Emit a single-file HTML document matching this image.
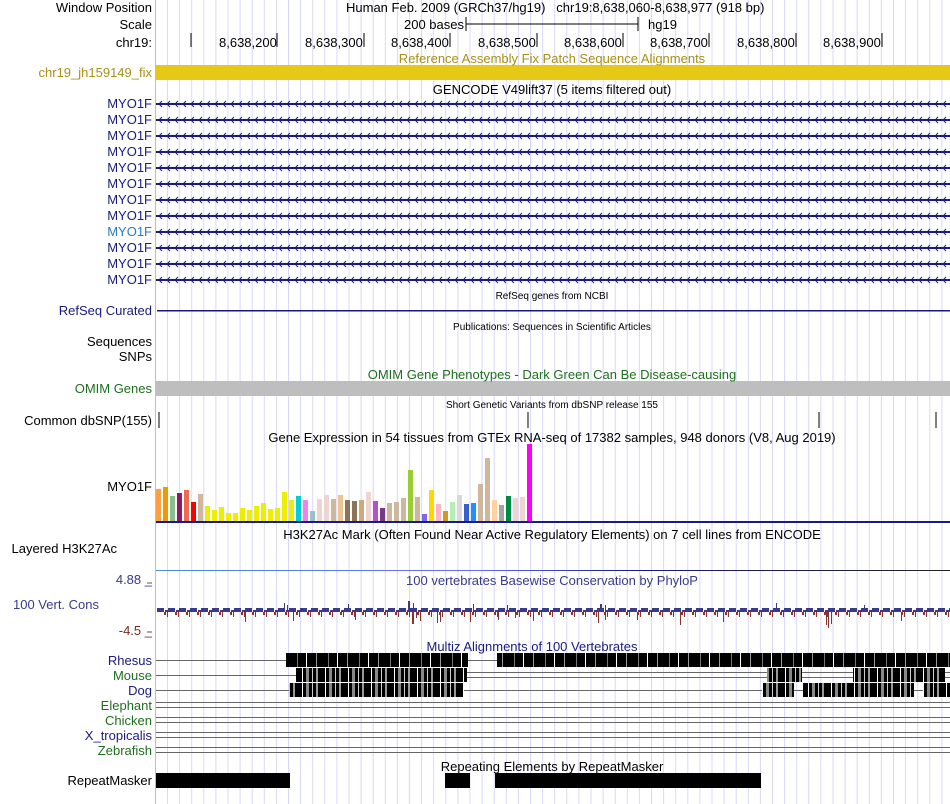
<!DOCTYPE html>
<html><head><meta charset="utf-8"><style>
body{margin:0;width:950px;height:804px;background:#fff;position:relative;overflow:hidden;font-family:"Liberation Sans",Arial,sans-serif;font-size:13px;color:#000}
.t{position:absolute;white-space:nowrap;line-height:15px}
.l{position:absolute;right:798px;white-space:nowrap;text-align:right;line-height:15px}
.c{position:absolute;white-space:nowrap;line-height:13px;transform:translateX(-50%)}
.s{font-size:10px}
.n{color:#1a1a80}.g{color:#1f6e1f}
</style></head><body>
<svg width="950" height="804" style="position:absolute;left:0;top:0">
<defs>
<pattern id="grid" x="167" y="0" width="12.1" height="10" patternUnits="userSpaceOnUse"><rect x="0" y="0" width="1" height="10" fill="#d8d8f6"/></pattern>
<pattern id="arr" x="158" y="0" width="8" height="16" patternUnits="userSpaceOnUse"><path d="M4 5 L1 8 L4 11" stroke="#1a1a80" fill="none" stroke-width="1"/></pattern>
<pattern id="stripeA" x="0" y="0" width="31" height="10" patternUnits="userSpaceOnUse"><rect width="31" height="10" fill="#000"/><rect x="6" width="1" height="10" fill="#999"/><rect x="18" width="1" height="10" fill="#777"/><rect x="27" width="1" height="10" fill="#fff"/></pattern>
<pattern id="stripeB" x="0" y="0" width="23" height="10" patternUnits="userSpaceOnUse"><rect width="23" height="10" fill="#000"/><rect x="3" width="1" height="10" fill="#fff"/><rect x="7" width="3" height="10" fill="#888"/><rect x="13" width="1" height="10" fill="#ccc"/><rect x="17" width="2" height="10" fill="#999"/></pattern>
<pattern id="cons" x="157" y="0" width="11" height="20" patternUnits="userSpaceOnUse"><rect x="0" y="8" width="7" height="4" fill="#3a3a8c"/><rect x="8" y="10" width="3" height="2" fill="#3a3a8c"/><rect x="7" y="12" width="2" height="3" fill="#8b3030"/><rect x="10" y="12" width="1" height="5" fill="#8b3030"/></pattern>
<linearGradient id="h3" x1="0" x2="1"><stop offset="0" stop-color="#4a8ad8"/><stop offset="0.4" stop-color="#6a6af0"/><stop offset="0.6" stop-color="#1a1a80"/><stop offset="1" stop-color="#222"/></linearGradient>
</defs>
<rect x="156" y="0" width="794" height="804" fill="url(#grid)"/>
<rect x="155" y="0" width="1" height="804" fill="#f4a8a8"/>
<path d="M466 17V31M466 24H638M638 17V31" stroke="#000" fill="none"/>
<path d="M191 33V47M277 33V47M364 33V47M450 33V47M537 33V47M623 33V47M709 33V47M796 33V47M882 33V47" stroke="#000"/>
<rect x="156" y="65" width="794" height="15" fill="#e6c816"/>
<g fill="#1a1a80">
<rect x="156" y="103" width="794" height="2"/><rect x="156" y="119" width="794" height="2"/><rect x="156" y="135" width="794" height="2"/><rect x="156" y="151" width="794" height="2"/><rect x="156" y="167" width="794" height="2"/><rect x="156" y="183" width="794" height="2"/><rect x="156" y="199" width="794" height="2"/><rect x="156" y="215" width="794" height="2"/><rect x="156" y="231" width="794" height="2"/><rect x="156" y="247" width="794" height="2"/><rect x="156" y="263" width="794" height="2"/><rect x="156" y="279" width="794" height="2"/>
</g>
<rect x="156" y="96" width="794" height="192" fill="url(#arr)"/>
<rect x="157" y="310" width="793" height="1.5" fill="#1a1a80"/>
<rect x="156" y="381" width="794" height="15" fill="#bebebe"/>
<path d="M159 412V428M528 412V428M819 412V428M936 412V428" stroke="#000"/>
<rect x="156" y="521" width="794" height="2" fill="#1a1a80"/>
<rect x="156" y="570" width="794" height="1" fill="url(#h3)"/>
<rect x="157" y="600" width="793" height="20" fill="url(#cons)"/>
<g fill="#3a3a8c"><rect x="284" y="603" width="1" height="9"/><rect x="287" y="605" width="1" height="7"/><rect x="348" y="604" width="1" height="8"/><rect x="408" y="601" width="2" height="11"/><rect x="413" y="603" width="1" height="9"/><rect x="473" y="604" width="1" height="8"/><rect x="600" y="604" width="2" height="8"/><rect x="605" y="605" width="1" height="7"/><rect x="776" y="603" width="1" height="9"/><rect x="864" y="605" width="1" height="7"/><rect x="507" y="605" width="1" height="7"/></g>
<g fill="#8b3030"><rect x="245" y="612" width="1" height="10"/><rect x="293" y="612" width="1" height="9"/><rect x="355" y="612" width="1" height="8"/><rect x="413" y="612" width="1" height="12"/><rect x="420" y="612" width="1" height="9"/><rect x="470" y="612" width="1" height="10"/><rect x="515" y="612" width="1" height="6"/><rect x="598" y="612" width="1" height="11"/><rect x="605" y="612" width="1" height="8"/><rect x="680" y="612" width="1" height="13"/><rect x="416" y="612" width="1" height="6"/><rect x="412" y="612" width="1" height="12"/><rect x="440" y="612" width="1" height="10"/><rect x="498" y="612" width="1" height="8"/><rect x="533" y="612" width="1" height="9"/><rect x="437" y="612" width="1" height="11"/><rect x="723" y="612" width="1" height="10"/><rect x="826" y="612" width="1" height="13"/><rect x="828" y="612" width="1" height="16"/><rect x="831" y="612" width="1" height="12"/><rect x="901" y="612" width="1" height="9"/><rect x="637" y="612" width="1" height="8"/></g>
<path d="M147 583H152M147 632H152" stroke="#555"/>
<g stroke="#666" stroke-width="1">
<path d="M156 660.5H286M468 660.5H497"/>
<path d="M156 675.5H296"/><path d="M467 672.5H950M467 677.5H950"/>
<path d="M156 690.5H289M464 690.5H950"/>
<path d="M156 702.5H950M156 707.5H950M156 717.5H950M156 722.5H950M156 732.5H950M156 737.5H950M156 747.5H950M156 752.5H950"/>
</g>
<rect x="286" y="653" width="182" height="14" fill="url(#stripeA)"/>
<rect x="497" y="653" width="453" height="14" fill="url(#stripeA)"/>
<rect x="296" y="668" width="171" height="14" fill="url(#stripeB)"/>
<rect x="767" y="668" width="35" height="14" fill="url(#stripeB)"/>
<rect x="853" y="668" width="92" height="14" fill="url(#stripeB)"/>
<rect x="289" y="683" width="175" height="14" fill="url(#stripeB)"/>
<rect x="762" y="683" width="32" height="14" fill="url(#stripeB)"/>
<rect x="803" y="683" width="111" height="14" fill="url(#stripeB)"/>
<rect x="923" y="683" width="27" height="14" fill="url(#stripeB)"/>
<rect x="156" y="773" width="134" height="15" fill="#000"/>
<rect x="445" y="773" width="25" height="15" fill="#000"/>
<rect x="495" y="773" width="266" height="15" fill="#000"/>
<g>
<rect x="156" y="489" width="5" height="32" fill="#ff9f3f"/><rect x="163" y="487" width="5" height="34" fill="#ee9a00"/><rect x="170" y="496" width="5" height="25" fill="#8fbc8f"/><rect x="177" y="493" width="5" height="28" fill="#8b1c62"/><rect x="184" y="490" width="5" height="31" fill="#ee6a50"/><rect x="191" y="502" width="5" height="19" fill="#ff0000"/><rect x="198" y="494" width="5" height="27" fill="#cdb79e"/><rect x="205" y="506" width="5" height="15" fill="#eeee00"/><rect x="212" y="510" width="5" height="11" fill="#eeee00"/><rect x="219" y="507" width="5" height="14" fill="#eeee00"/><rect x="226" y="513" width="5" height="8" fill="#eeee00"/><rect x="233" y="513" width="5" height="8" fill="#eeee00"/><rect x="240" y="508" width="5" height="13" fill="#eeee00"/><rect x="247" y="510" width="5" height="11" fill="#eeee00"/><rect x="254" y="506" width="5" height="15" fill="#eeee00"/><rect x="261" y="503" width="5" height="18" fill="#eeee00"/><rect x="268" y="509" width="5" height="12" fill="#eeee00"/><rect x="275" y="508" width="5" height="13" fill="#eeee00"/><rect x="282" y="492" width="5" height="29" fill="#eeee00"/><rect x="289" y="500" width="5" height="21" fill="#eeee00"/><rect x="296" y="496" width="5" height="25" fill="#00ced1"/><rect x="303" y="500" width="5" height="21" fill="#ee82ee"/><rect x="310" y="511" width="5" height="10" fill="#9ac0cd"/><rect x="317" y="499" width="5" height="22" fill="#eed5d2"/><rect x="324" y="495" width="5" height="26" fill="#eed5d2"/><rect x="331" y="499" width="5" height="22" fill="#cdb79e"/><rect x="338" y="495" width="5" height="26" fill="#eec591"/><rect x="345" y="500" width="5" height="21" fill="#8b7355"/><rect x="352" y="501" width="5" height="20" fill="#8b7355"/><rect x="359" y="500" width="5" height="21" fill="#cdaa7d"/><rect x="366" y="492" width="5" height="29" fill="#eed5d2"/><rect x="373" y="501" width="5" height="20" fill="#b452cd"/><rect x="380" y="508" width="5" height="13" fill="#7a378b"/><rect x="387" y="503" width="5" height="18" fill="#cdb79e"/><rect x="394" y="502" width="5" height="19" fill="#cdb79e"/><rect x="401" y="498" width="5" height="23" fill="#cdb79e"/><rect x="408" y="470" width="5" height="51" fill="#9acd32"/><rect x="415" y="497" width="5" height="24" fill="#cdb79e"/><rect x="422" y="514" width="5" height="7" fill="#7b68ee"/><rect x="429" y="490" width="5" height="31" fill="#ffd700"/><rect x="436" y="504" width="5" height="17" fill="#ffb6c1"/><rect x="443" y="511" width="5" height="10" fill="#cd9b1d"/><rect x="450" y="502" width="5" height="19" fill="#b4eeb4"/><rect x="457" y="495" width="5" height="26" fill="#d9d9d9"/><rect x="464" y="504" width="5" height="17" fill="#3a5fcd"/><rect x="471" y="503" width="5" height="18" fill="#1e90ff"/><rect x="478" y="484" width="5" height="37" fill="#cdb79e"/><rect x="485" y="458" width="5" height="63" fill="#cdb79e"/><rect x="492" y="500" width="5" height="21" fill="#ffd39b"/><rect x="499" y="505" width="5" height="16" fill="#a6a6a6"/><rect x="506" y="496" width="5" height="25" fill="#008b45"/><rect x="513" y="498" width="5" height="23" fill="#eed5d2"/><rect x="520" y="497" width="5" height="24" fill="#eed5d2"/><rect x="527" y="444" width="5" height="77" fill="#ff00ff"/>
</g>
</svg>

<div class="l" style="top:0">Window Position</div>
<div class="l" style="top:17px">Scale</div>
<div class="l" style="top:35px">chr19:</div>
<div class="t" style="left:346px;top:0">Human Feb. 2009 (GRCh37/hg19)&nbsp;&nbsp; chr19:8,638,060-8,638,977 (918 bp)</div>
<div class="t" style="left:404px;top:17px">200 bases</div>
<div class="t" style="left:648px;top:17px">hg19</div>
<div class="t" style="left:219px;top:35px">8,638,200</div>
<div class="t" style="left:305px;top:35px">8,638,300</div>
<div class="t" style="left:391px;top:35px">8,638,400</div>
<div class="t" style="left:478px;top:35px">8,638,500</div>
<div class="t" style="left:564px;top:35px">8,638,600</div>
<div class="t" style="left:650px;top:35px">8,638,700</div>
<div class="t" style="left:737px;top:35px">8,638,800</div>
<div class="t" style="left:823px;top:35px">8,638,900</div>
<div class="c" style="left:552px;top:52px;color:#a88f18">Reference Assembly Fix Patch Sequence Alignments</div>
<div class="l" style="top:65px;color:#a88f18">chr19_jh159149_fix</div>
<div class="c" style="left:552px;top:83px">GENCODE V49lift37 (5 items filtered out)</div>
<div class="l n" style="top:96px">MYO1F</div>
<div class="l n" style="top:112px">MYO1F</div>
<div class="l n" style="top:128px">MYO1F</div>
<div class="l n" style="top:144px">MYO1F</div>
<div class="l n" style="top:160px">MYO1F</div>
<div class="l n" style="top:176px">MYO1F</div>
<div class="l n" style="top:192px">MYO1F</div>
<div class="l n" style="top:208px">MYO1F</div>
<div class="l" style="top:224px;color:#2a7ac0">MYO1F</div>
<div class="l n" style="top:240px">MYO1F</div>
<div class="l n" style="top:256px">MYO1F</div>
<div class="l n" style="top:272px">MYO1F</div>
<div class="c s" style="left:552px;top:290px">RefSeq genes from NCBI</div>
<div class="l n" style="top:303px">RefSeq Curated</div>
<div class="c s" style="left:552px;top:321px">Publications: Sequences in Scientific Articles</div>
<div class="l" style="top:334px">Sequences</div>
<div class="l" style="top:349px">SNPs</div>
<div class="c g" style="left:552px;top:368px">OMIM Gene Phenotypes - Dark Green Can Be Disease-causing</div>
<div class="l g" style="top:381px">OMIM Genes</div>
<div class="c s" style="left:552px;top:399px">Short Genetic Variants from dbSNP release 155</div>
<div class="l" style="top:413px">Common dbSNP(155)</div>
<div class="c" style="left:552px;top:431px">Gene Expression in 54 tissues from GTEx RNA-seq of 17382 samples, 948 donors (V8, Aug 2019)</div>
<div class="l" style="top:479px">MYO1F</div>
<div class="c" style="left:552px;top:528px">H3K27Ac Mark (Often Found Near Active Regulatory Elements) on 7 cell lines from ENCODE</div>
<div class="l" style="top:541px;right:833px">Layered H3K27Ac</div>
<div class="c" style="left:552px;top:574px;color:#3a3a8c">100 vertebrates Basewise Conservation by PhyloP</div>
<div class="l" style="top:572px;color:#3a3a8c">4.88 _</div>
<div class="l" style="top:597px;right:851px;color:#3a3a8c">100 Vert. Cons</div>
<div class="l" style="top:623px;color:#7a2a2a">-4.5 _</div>
<div class="c n" style="left:532px;top:640px">Multiz Alignments of 100 Vertebrates</div>
<div class="l n" style="top:653px">Rhesus</div>
<div class="l g" style="top:668px">Mouse</div>
<div class="l n" style="top:683px">Dog</div>
<div class="l g" style="top:698px">Elephant</div>
<div class="l g" style="top:713px">Chicken</div>
<div class="l n" style="top:728px">X_tropicalis</div>
<div class="l g" style="top:743px">Zebrafish</div>
<div class="c" style="left:552px;top:760px">Repeating Elements by RepeatMasker</div>
<div class="l" style="top:773px">RepeatMasker</div>
</body></html>
